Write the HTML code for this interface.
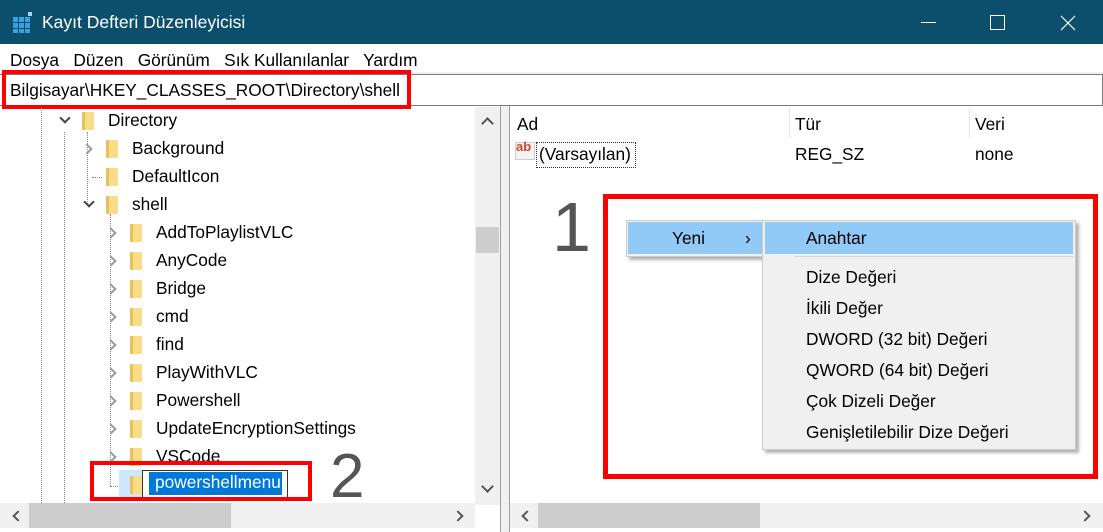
<!DOCTYPE html>
<html><head><meta charset="utf-8"><style>
*{margin:0;padding:0;box-sizing:border-box}
body{width:1103px;height:532px;overflow:hidden;background:#fff;font-family:"Liberation Sans",sans-serif;font-size:17.3px;color:#000;position:relative}
.a{position:absolute;white-space:nowrap;line-height:1.35}
.fold{position:absolute;width:12px;height:18px;background:linear-gradient(90deg,#e8c15a 0 3px,#f8dc8a 3px);border-radius:1px}
.chev{position:absolute;width:8px;height:8px;border-right:2px solid #999;border-bottom:2px solid #999;transform:rotate(-45deg)}
.chevd{position:absolute;width:8px;height:8px;border-right:2px solid #444;border-bottom:2px solid #444;transform:rotate(45deg)}
.dv{position:absolute;border-left:1px dotted #888}
.dh{position:absolute;border-top:1px dotted #888}
</style></head><body>
<div class="a" style="left:0;top:0;width:1103px;height:44px;background:#0b4f6c"></div>
<svg class="a" style="left:12px;top:12px" width="22" height="22"><g fill="#3aa0dc"><rect x="1" y="5" width="5" height="5"/><rect x="7" y="5" width="5" height="5"/><rect x="1" y="11" width="5" height="5"/><rect x="7" y="11" width="5" height="5"/><rect x="13" y="11" width="5" height="5"/><rect x="1" y="17" width="5" height="4"/><rect x="7" y="17" width="5" height="4"/><rect x="13" y="17" width="5" height="4"/><rect x="13" y="5" width="5" height="5"/></g><rect x="16" y="0" width="4" height="4" fill="#9fd4f4"/></svg>
<div class="a" style="left:42px;top:11px;color:#fff;font-size:17.5px">Kayıt Defteri Düzenleyicisi</div>
<div class="a" style="left:921px;top:22px;width:15px;height:1px;background:#fff"></div>
<div class="a" style="left:990px;top:15px;width:15px;height:15px;border:1px solid #fff"></div>
<svg class="a" style="left:1060px;top:15px" width="16" height="16"><path d="M1 1L15 15M15 1L1 15" stroke="#fff" stroke-width="1.2"/></svg>
<div class="a" style="left:10px;top:49px">Dosya&nbsp;&nbsp; Düzen&nbsp;&nbsp; Görünüm&nbsp;&nbsp; Sık Kullanılanlar&nbsp;&nbsp; Yardım</div>
<div class="a" style="left:0;top:72px;width:1103px;height:2px;background:#f0f0f0"></div>
<div class="a" style="left:0;top:74px;width:1103px;height:32px;border:1px solid #7a7a7a;border-left:none"></div>
<div class="a" style="left:2px;top:70px;width:409px;height:39px;border:4px solid #f00"></div>
<div class="a" style="left:10px;top:79px">Bilgisayar\HKEY_CLASSES_ROOT\Directory\shell</div>
<div class="a" style="left:500px;top:106px;width:10px;height:426px;background:#f0f0f0;border-left:1px solid #a0a0a0;border-right:1px solid #a0a0a0"></div>
<div class="a" style="left:475px;top:107px;width:25px;height:398px;background:#f0f0f0"></div>
<div class="a" style="left:476px;top:227px;width:23px;height:26px;background:#cdcdcd"></div>
<div class="a" style="left:483px;top:119px;width:9px;height:9px;border-left:2px solid #555;border-top:2px solid #555;transform:rotate(45deg)"></div>
<div class="a" style="left:483px;top:482px;width:9px;height:9px;border-right:2px solid #555;border-bottom:2px solid #555;transform:rotate(45deg)"></div>
<div class="a" style="left:0;top:503px;width:475px;height:25px;background:#f0f0f0"></div>
<div class="a" style="left:29px;top:503px;width:202px;height:25px;background:#cdcdcd"></div>
<div class="a" style="left:14px;top:512px;width:8px;height:8px;border-left:2px solid #555;border-bottom:2px solid #555;transform:rotate(45deg)"></div>
<div class="a" style="left:454px;top:512px;width:8px;height:8px;border-right:2px solid #555;border-top:2px solid #555;transform:rotate(45deg)"></div>
<div class="dv" style="left:41px;top:108px;height:395px"></div>
<div class="dv" style="left:64px;top:132px;height:371px"></div>
<div class="dv" style="left:87px;top:132px;height:72px"></div>
<div class="dh" style="left:92px;top:177px;width:10px"></div>
<div class="dv" style="left:110px;top:214px;height:272px"></div>
<div class="dh" style="left:110px;top:486px;width:16px"></div>
<div class="chevd" style="left:61px;top:114px"></div><div class="fold" style="left:82px;top:112px"></div><div class="a" style="left:108px;top:109px">Directory</div>
<div class="chev" style="left:83px;top:145px"></div><div class="fold" style="left:106px;top:140px"></div><div class="a" style="left:132px;top:137px">Background</div>
<div class="fold" style="left:106px;top:168px"></div><div class="a" style="left:132px;top:165px">DefaultIcon</div>
<div class="chevd" style="left:85px;top:198px"></div><div class="fold" style="left:106px;top:196px"></div><div class="a" style="left:132px;top:193px">shell</div>
<div class="chev" style="left:107px;top:229px"></div><div class="fold" style="left:130px;top:224px"></div><div class="a" style="left:156px;top:221px">AddToPlaylistVLC</div>
<div class="chev" style="left:107px;top:257px"></div><div class="fold" style="left:130px;top:252px"></div><div class="a" style="left:156px;top:249px">AnyCode</div>
<div class="chev" style="left:107px;top:285px"></div><div class="fold" style="left:130px;top:280px"></div><div class="a" style="left:156px;top:277px">Bridge</div>
<div class="chev" style="left:107px;top:313px"></div><div class="fold" style="left:130px;top:308px"></div><div class="a" style="left:156px;top:305px">cmd</div>
<div class="chev" style="left:107px;top:341px"></div><div class="fold" style="left:130px;top:336px"></div><div class="a" style="left:156px;top:333px">find</div>
<div class="chev" style="left:107px;top:369px"></div><div class="fold" style="left:130px;top:364px"></div><div class="a" style="left:156px;top:361px">PlayWithVLC</div>
<div class="chev" style="left:107px;top:397px"></div><div class="fold" style="left:130px;top:392px"></div><div class="a" style="left:156px;top:389px">Powershell</div>
<div class="chev" style="left:107px;top:425px"></div><div class="fold" style="left:130px;top:420px"></div><div class="a" style="left:156px;top:417px">UpdateEncryptionSettings</div>
<div class="chev" style="left:107px;top:453px"></div><div class="fold" style="left:130px;top:448px"></div><div class="a" style="left:156px;top:445px">VSCode</div>
<div class="a" style="left:119px;top:470px;width:23px;height:28px;background:#cce8ff"></div>
<div class="fold" style="left:130px;top:476px"></div>
<div class="a" style="left:142px;top:470px;width:146px;height:28px;border:1px solid #333;border-right:none"></div>
<div class="a" style="left:287px;top:470px;width:1px;height:28px;background:#333"></div>
<div class="a" style="left:149px;top:472px;width:133px;height:23px;background:#0078d7"></div>
<div class="a" style="left:155px;top:471px;color:#fff">powershellmenu</div>
<div class="a" style="left:90px;top:461px;width:222px;height:40px;border:4px solid #f00"></div>
<div class="a" style="left:330px;top:435px;font-size:62px;color:#555">2</div>
<div class="a" style="left:789px;top:108px;width:1px;height:30px;background:#e5e5e5"></div>
<div class="a" style="left:969px;top:108px;width:1px;height:30px;background:#e5e5e5"></div>
<div class="a" style="left:517px;top:113px">Ad</div>
<div class="a" style="left:795px;top:113px">Tür</div>
<div class="a" style="left:975px;top:113px">Veri</div>
<div class="a" style="left:515px;top:142px;width:20px;height:18px;background:#f4f4f4;border:1px solid #ccc"></div>
<div class="a" style="left:516px;top:138px;color:#d2452c;font-weight:bold;font-size:13px">ab</div>
<div class="a" style="left:536px;top:142px;width:100px;height:26px;border:1px dotted #333"></div>
<div class="a" style="left:539px;top:143px">(Varsayılan)</div>
<div class="a" style="left:795px;top:143px">REG_SZ</div>
<div class="a" style="left:975px;top:143px">none</div>
<div class="a" style="left:510px;top:503px;width:593px;height:25px;background:#f0f0f0"></div>
<div class="a" style="left:538px;top:503px;width:222px;height:25px;background:#cdcdcd"></div>
<div class="a" style="left:523px;top:512px;width:8px;height:8px;border-left:2px solid #555;border-bottom:2px solid #555;transform:rotate(45deg)"></div>
<div class="a" style="left:1081px;top:512px;width:8px;height:8px;border-right:2px solid #555;border-top:2px solid #555;transform:rotate(45deg)"></div>
<div class="a" style="left:603px;top:194px;width:495px;height:285px;border:5px solid #f00"></div>
<div class="a" style="left:552px;top:180px;font-size:70px;color:#555">1</div>
<div class="a" style="left:626px;top:220px;width:140px;height:37px;background:#f0f0f0;border:1px solid #ccc;box-shadow:3px 3px 3px rgba(0,0,0,.3)"></div>
<div class="a" style="left:628px;top:222px;width:136px;height:32px;background:#91c9f7"></div>
<div class="a" style="left:672px;top:227px">Yeni</div>
<div class="a" style="left:745px;top:227px">›</div>
<div class="a" style="left:762px;top:220px;width:314px;height:230px;background:#f0f0f0;border:1px solid #ccc;box-shadow:3px 3px 3px rgba(0,0,0,.3)"></div>
<div class="a" style="left:765px;top:222px;width:308px;height:32px;background:#91c9f7"></div>
<div class="a" style="left:795px;top:256px;width:278px;height:1px;background:#d7d7d7"></div>
<div class="a" style="left:806px;top:227px">Anahtar</div>
<div class="a" style="left:806px;top:266px">Dize Değeri</div>
<div class="a" style="left:806px;top:297px">İkili Değer</div>
<div class="a" style="left:806px;top:328px">DWORD (32 bit) Değeri</div>
<div class="a" style="left:806px;top:359px">QWORD (64 bit) Değeri</div>
<div class="a" style="left:806px;top:390px">Çok Dizeli Değer</div>
<div class="a" style="left:806px;top:421px">Genişletilebilir Dize Değeri</div>
</body></html>
